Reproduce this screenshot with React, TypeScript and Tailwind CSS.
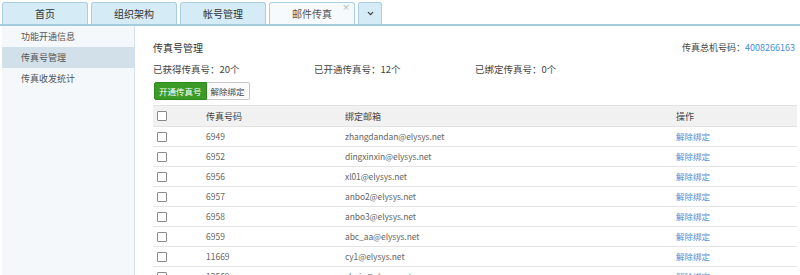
import { ChevronDown } from 'lucide-react'

const tabs = ['首页', '组织架构', '帐号管理']

const menu = ['功能开通信息', '传真号管理', '传真收发统计']

const rows = [
  { no: '6949', mail: 'zhangdandan@elysys.net' },
  { no: '6952', mail: 'dingxinxin@elysys.net' },
  { no: '6956', mail: 'xl01@elysys.net' },
  { no: '6957', mail: 'anbo2@elysys.net' },
  { no: '6958', mail: 'anbo3@elysys.net' },
  { no: '6959', mail: 'abc_aa@elysys.net' },
  { no: '11669', mail: 'cy1@elysys.net' },
  { no: '12569', mail: 'zhujx@elysys.net' },
]

const Checkbox = () => (
  <span className="block w-[10px] h-[10px] border border-[#8a8a8a] rounded-[1px] bg-white" />
)

const App = () => {
  return (
    <div className="w-[800px] h-[275px] overflow-hidden bg-white font-['Noto_Sans_CJK_SC',sans-serif] text-[10px] text-[#333]">
      {/* Tab bar */}
      <div className="h-[26px] pt-[2px] pl-[2px] flex items-stretch gap-[3px] border-b-2 border-[#a6cbdc]">
        {tabs.map((t) => (
          <div
            key={t}
            className="w-[86px] flex items-center justify-center bg-[#d5ebf6] border border-b-0 border-[#a9cfe1] rounded-t-[3px] text-[10px] text-[#333]"
          >
            {t}
          </div>
        ))}
        <div className="relative w-[86px] flex items-center justify-center bg-[#f6fafc] border border-b-0 border-[#a9cfe1] rounded-t-[3px] text-[10px] text-[#555]">
          邮件传真
          <span className="absolute right-[4px] top-[0px] text-[8px] leading-none text-[#9aa]">×</span>
        </div>
        <div className="w-[24px] flex items-center justify-center bg-[#d5ebf6] border border-b-0 border-[#a9cfe1] rounded-t-[3px]">
          <ChevronDown className="w-[9px] h-[9px] text-[#333]" strokeWidth={3} />
        </div>
      </div>

      <div className="flex h-[249px]">
        {/* Sidebar */}
        <div className="w-[133px] ml-[2px] bg-[#f4f8fb] border-r border-[#d3e2ec] shrink-0">
          {menu.map((m, i) => (
            <div
              key={m}
              className={`h-[21px] flex items-center pl-[19px] text-[9px] text-[#555] ${i === 1 ? 'bg-[#d1e0e9]' : ''}`}
            >
              {m}
            </div>
          ))}
        </div>

        {/* Content */}
        <div className="flex-1 pl-[18px] pr-[3px] pt-[15px]">
          <div className="flex items-center justify-between h-[14px] leading-[14px] pr-[2px]">
            <span className="text-[10px] text-[#333]">传真号管理</span>
            <span className="text-[9px] text-[#444]">
              传真总机号码：<span className="text-[#3f8fd6]">4008266163</span>
            </span>
          </div>

          <div className="mt-[7px] h-[14px] leading-[14px] flex items-center text-[9.5px] text-[#444]">
            <span className="w-[161px]">已获得传真号：20个</span>
            <span className="w-[161px]">已开通传真号：12个</span>
            <span>已绑定传真号：0个</span>
          </div>

          <div className="mt-[6px] flex h-[18px] ml-[1px] leading-none">
            <button className="px-[4px] bg-[#3c9b27] border border-[#2f8a1d] rounded-l-[2px] text-white text-[8.5px]">
              开通传真号
            </button>
            <button className="px-[4px] bg-[#fafafa] border border-l-0 border-[#c8c8c8] rounded-r-[2px] text-[#444] text-[8.5px]">
              解除绑定
            </button>
          </div>

          {/* Table */}
          <div className="mt-[5px] text-[8.5px] leading-none">
            <div className="grid grid-cols-[48px_139px_331px_1fr] h-[22px] items-center bg-[#f1f1f1] border-t border-b border-[#e2e2e2] text-[#444] text-[9px]">
              <div className="pl-[4px]"><Checkbox /></div>
              <div className="pl-[5px]">传真号码</div>
              <div className="pl-[5px]">绑定邮箱</div>
              <div className="pl-[5px]">操作</div>
            </div>
            {rows.map((r) => (
              <div
                key={r.no}
                className="grid grid-cols-[48px_139px_331px_1fr] h-[20px] items-center border-b border-[#e4e4e4] text-[#666]"
              >
                <div className="pl-[4px]"><Checkbox /></div>
                <div className="pl-[5px]">{r.no}</div>
                <div className="pl-[5px] tracking-[-0.1px]">{r.mail}</div>
                <div className="pl-[5px] text-[#4a8fd4]">解除绑定</div>
              </div>
            ))}
          </div>
        </div>
      </div>
    </div>
  )
}

export default App
